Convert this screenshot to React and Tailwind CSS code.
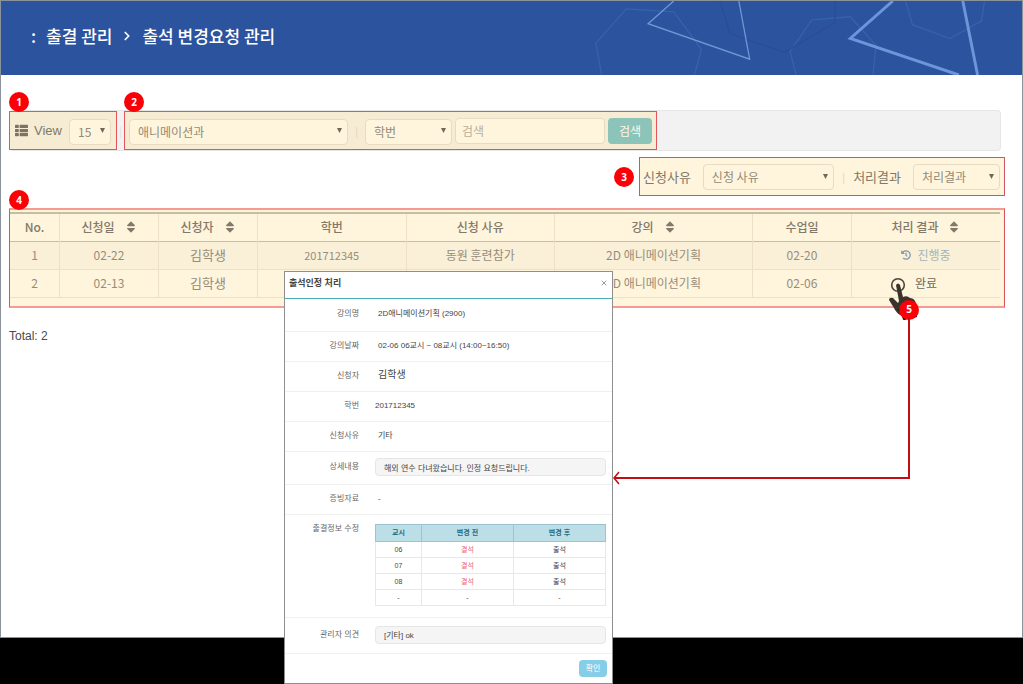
import { ChevronRight, X } from "lucide-react";
import { FaThList, FaSort, FaHistory } from "react-icons/fa";

const requests = [
  { no: 1, date: "02-22", name: "김학생", code: "201712345", reason: "동원 훈련참가", lecture: "2D 애니메이션기획", day: "02-20", done: false },
  { no: 2, date: "02-13", name: "김학생", code: "", reason: "", lecture: "2D 애니메이션기획", day: "02-06", done: true },
];

const columns = [
  { title: "No.", width: "w-[5%]" },
  { title: "신청일", width: "w-[10%]", sort: true },
  { title: "신청자", width: "w-[10%]", sort: true },
  { title: "학번", width: "w-[15%]" },
  { title: "신청 사유", width: "w-[15%]" },
  { title: "강의", width: "w-[20%]", sort: true },
  { title: "수업일", width: "w-[10%]" },
  { title: "처리 결과", width: "w-[15%]", sort: true },
];

const periods = ["06", "07", "08"];

// Red numbered marker
function Badge({ n, className }) {
  return (
    <span
      className={`absolute z-10 flex h-5 w-5 items-center justify-center rounded-full bg-[#fb0007] font-['Open_Sans',sans-serif] text-[10px] font-bold text-white ${className}`}
    >
      {n}
    </span>
  );
}

function Select({ label, text, className }) {
  return (
    <div className={`relative h-[26px] ${className}`}>
      <select
        aria-label={label}
        className="h-full w-full appearance-none rounded border border-[#e6dcc3] bg-[#fff5dd] pl-2 text-xs text-[#928a78]"
      >
        <option>{text}</option>
      </select>
      <svg className="pointer-events-none absolute right-1.5 top-2.5 h-[5px] w-[5px]" viewBox="0 0 5 5">
        <path d="M0 0H5L2.5 5Z" fill="#6f6859" />
      </svg>
    </div>
  );
}

function Header() {
  return (
    <header className="relative flex h-[74px] items-center bg-[#2c539e]">
      <svg className="absolute right-0 top-0 h-[74px] w-[443px]" viewBox="0 0 443 75" fill="none">
        <g stroke="#3563ad" strokeWidth="1.3">
          <path d="M20 75 14 43 45 8 93 11 121 49 114 75" />
          <path d="M217 75 211 51 233 19 272 16 298 45 295 75" />
          <path d="M328 0 335 24 373 38 405 20 408 0" />
        </g>
        <path d="M140 0 150 33 205 52 256 22 257 0" stroke="#294e97" strokeWidth="1.3" />
        <path d="M93 0 67 23 170 59 159 0" stroke="#6f98d6" strokeWidth="1.3" />
        <path d="M315 0 272 38 382 75M386 0 401 75" stroke="#6c96da" strokeWidth="3" />
      </svg>
      <h1 className="relative flex items-center pb-1 pl-[30px] text-[17px] leading-6 font-medium text-white">
        <span className="mr-2.5">:</span>
        출결 관리
        <ChevronRight className="mx-2 h-3.5 w-3.5" strokeWidth={3} />
        출석 변경요청 관리
      </h1>
    </header>
  );
}

function Toolbar() {
  return (
    <div className="mr-1 flex h-[41px] items-center rounded border-y border-r border-[#e6e6e6] bg-[#f2f2f2]">
      <div className="relative flex h-[39px] w-[108px] items-center border border-[#e0565c] bg-[#f6ecd4] px-[5px]">
        <Badge n={1} className="-top-5 -left-px" />
        <FaThList className="mr-1.5 h-[13px] w-[13px] text-[#7b7464]" />
        <span className="flex-1 font-['Liberation_Sans',sans-serif] text-[13px] text-[#7f7867]">View</span>
        <Select label="View" text="15" className="w-[42px]" />
      </div>
      <span className="w-[7px] text-center text-[10px] text-[#dddddd]">|</span>
      <div className="relative flex h-[39px] w-[533px] items-center border border-[#e0565c] bg-[#f6ecd4] px-1">
        <Badge n={2} className="-top-5 -left-px" />
        <Select label="학과" text="애니메이션과" className="w-[219px]" />
        <span className="flex-1 text-center text-[10px] text-[#ddd2b8]">|</span>
        <Select label="검색 조건" text="학번" className="w-[87px]" />
        <input
          type="text"
          aria-label="검색"
          placeholder="검색"
          className="ml-[3px] h-[26px] w-[150px] rounded border border-[#e6dcc3] bg-[#fff5dd] px-1.5 text-xs placeholder:text-[#b9b09b]"
        />
        <button className="ml-[3px] h-[26px] w-11 rounded bg-[#8cc4b9] text-xs text-[#fff8e6]">검색</button>
      </div>
    </div>
  );
}

function ResultFilter() {
  return (
    <div className="relative mt-1.5 ml-auto flex h-[39px] w-[366px] items-center border border-[#cf5560] bg-[#fff4dc] pr-1 pl-[3px] text-[13px] text-[#7f7867]">
      <Badge n={3} className="-left-[26px] top-[9px]" />
      <span>신청사유</span>
      <Select label="신청사유" text="신청 사유" className="ml-3 w-[131px]" />
      <span className="flex-1 text-center text-[10px] text-[#ddd2b8]">|</span>
      <span>처리결과</span>
      <Select label="처리결과" text="처리결과" className="ml-3 w-[87px]" />
    </div>
  );
}

// Pointing hand with the tap ring round the fingertip
function TapHand() {
  return (
    <svg className="absolute left-9 top-[6px] z-10 h-11 w-8" viewBox="0 0 32 44">
      <circle cx="10" cy="9" r="6.3" fill="none" stroke="#4a4438" strokeWidth="1.6" />
      <path
        d="M8 9Q10 6 12 9L15 21Q19 19 22 22Q27 22 28 28L29 40 15 44 14 40Q8 37 6 32L1 24Q1 21 5 22L10 27 11 25Z"
        fill="#39342b"
      />
      <path d="M10 33 28 33 29 41 16 44 14 40Z" fill="#000" />
    </svg>
  );
}

function RequestTable() {
  return (
    <div className="relative mt-3 border-x border-y-2 border-x-[#d9535a] border-y-[#f79a92] bg-[#fff4dc] pt-[2px] pr-1 pb-2">
      <Badge n={4} className="-top-5 -left-px" />
      <table className="w-full table-fixed border-collapse text-center text-xs text-[#958d7b]">
        <thead>
          <tr className="h-7 border-t-2 border-b border-[#c3bfa3]">
            {columns.map((c) => (
              <th
                key={c.title}
                className={`${c.width} border-r border-[#ece1c7] p-0 font-medium text-[#82796a] last:border-r-0`}
              >
                <span className="inline-flex items-center">
                  {c.title}
                  {c.sort && <FaSort className="ml-2.5 h-3.5 w-3" />}
                </span>
              </th>
            ))}
          </tr>
        </thead>
        <tbody>
          {requests.map((r) => (
            <tr key={r.no} className="h-7 border-b border-[#ece1c7] odd:bg-[#faf0d8] [&>td]:border-r [&>td]:border-[#ece1c7] [&>td]:p-0 [&>td:last-child]:border-r-0">
              <td>{r.no}</td>
              <td>{r.date}</td>
              <td className="text-[13px]">{r.name}</td>
              <td className="text-[11px]">{r.code}</td>
              <td>{r.reason}</td>
              <td>{r.lecture}</td>
              <td>{r.day}</td>
              <td className="relative">
                {r.done ? (
                  <>
                    <TapHand />
                    <Badge n={5} className="left-[47px] top-[30px]" />
                    <span className="text-[#6f6858]">완료</span>
                  </>
                ) : (
                  <span className="inline-flex items-center gap-1.5 text-[#a3b4bb]">
                    <FaHistory className="h-2.5 w-2.5 text-[#8298ab]" />
                    진행중
                  </span>
                )}
              </td>
            </tr>
          ))}
        </tbody>
      </table>
    </div>
  );
}

function Row({ label, children, className = "h-[30px] items-center" }) {
  return (
    <div className={`flex border-b border-[#f0f0f0] pb-0.5 ${className}`}>
      <dt className="w-[74px] shrink-0 text-right text-[#666666]">{label}</dt>
      <dd className="ml-4 flex-1 pr-1.5">{children}</dd>
    </div>
  );
}

function RequestDialog() {
  return (
    <div
      role="dialog"
      aria-label="출석인정 처리"
      className="absolute left-[284px] top-[271px] z-20 w-[329px] border border-[#8e8e8e] bg-white font-['Liberation_Sans','Noto_Sans_CJK_KR',sans-serif] text-[8px] leading-3 text-[#444444]"
    >
      <div className="flex h-[27px] items-center justify-between border-b border-[#48adb5] px-1 pb-1">
        <h2 className="text-[9px] font-bold">출석인정 처리</h2>
        <button aria-label="닫기">
          <X className="h-2 w-2 text-[#999999]" strokeWidth={3} />
        </button>
      </div>
      <dl>
        <Row label="강의명" className="h-[33px] items-center">
          <span className="pl-[3px]">2D애니메이션기획 (2900)</span>
        </Row>
        <Row label="강의날짜">
          <span className="pl-[3px]">02-06 06교시 ~ 08교시 (14:00~16:50)</span>
        </Row>
        <Row label="신청자">
          <span className="pl-[3px] text-[10px]">김학생</span>
        </Row>
        <Row label="학번">201712345</Row>
        <Row label="신청사유">
          <span className="pl-[3px]">기타</span>
        </Row>
        <Row label="상세내용" className="h-[33px] items-center">
          <input
            readOnly
            aria-label="상세내용"
            value="해외 연수 다녀왔습니다. 인정 요청드립니다."
            className="block h-[18px] w-full rounded-sm border border-[#e6e6e6] bg-[#f5f5f5] px-2"
          />
        </Row>
        <Row label="증빙자료">
          <span className="pl-[3px]">-</span>
        </Row>
        <Row label="출결정보 수정" className="h-[103px] pt-2">
          <table className="mt-px w-full table-fixed border-collapse text-center text-[7px] [&_td]:h-4 [&_td]:border [&_td]:border-[#e8e8e8] [&_td]:p-0">
            <thead>
              <tr className="h-[17px] bg-[#bcdfe7] text-[#246b80] [&>th]:border [&>th]:border-[#9cc4cf] [&>th]:p-0">
                <th className="w-[20%]">교시</th>
                <th className="w-[40%]">변경 전</th>
                <th className="w-[40%]">변경 후</th>
              </tr>
            </thead>
            <tbody>
              {periods.map((p) => (
                <tr key={p}>
                  <td>{p}</td>
                  <td className="text-[#f4616a]">결석</td>
                  <td>출석</td>
                </tr>
              ))}
              <tr>
                <td>-</td>
                <td>-</td>
                <td>-</td>
              </tr>
            </tbody>
          </table>
        </Row>
        <Row label="관리자 의견" className="h-9 items-center">
          <input
            readOnly
            aria-label="관리자 의견"
            value="[기타] ok"
            className="block h-[18px] w-full rounded-sm border border-[#e6e6e6] bg-[#f5f5f5] px-2"
          />
        </Row>
      </dl>
      <div className="flex h-[29px] items-center justify-end px-[5px]">
        <button className="h-[17px] w-7 rounded-sm bg-[#86cde8] text-[8px] text-white">확인</button>
      </div>
    </div>
  );
}

export default function App() {
  return (
    <div className="relative flex min-h-screen flex-col bg-black font-['Noto_Sans_CJK_KR',sans-serif]">
      <div className="flex-1 border border-[#8a929c] bg-white">
        <Header />
        <main className="pt-[35px] pr-[17px] pl-2">
          <Toolbar />
          <ResultFilter />
          <RequestTable />
          <p className="mt-[18px] font-['Liberation_Sans',sans-serif] text-xs leading-5 text-[#4a4a4a]">Total: 2</p>
        </main>
      </div>
      <div className="h-[46px]" />

      {/* connector from marker 5 to the dialog */}
      <svg className="absolute left-[613px] top-[318px] z-10 h-[168px] w-[300px]" viewBox="0 0 300 168" fill="none" stroke="#c20d13">
        <path d="M296 0V160H2" strokeWidth="2" />
        <path d="M6 154 1 160 6 166" strokeWidth="1.5" />
      </svg>
      <RequestDialog />
    </div>
  );
}
